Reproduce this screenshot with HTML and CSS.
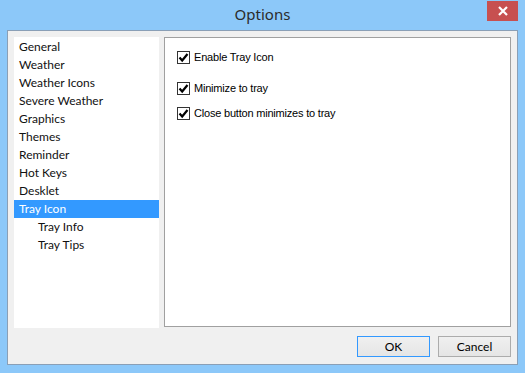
FILE: index.html
```html
<!DOCTYPE html>
<html lang="en">
<head>
<meta charset="UTF-8">
<title>Options</title>
<link rel="stylesheet" href="styles.css">
</head>
<body>
<div class="window">
  <div class="titlebar">
    <span class="title">Options</span>
    <button class="close" type="button">
      <svg width="12" height="10" viewBox="0 0 12 10"><path d="M2 1 L10 9 M10 1 L2 9" stroke="#fff" stroke-width="2.2"/></svg>
    </button>
  </div>

  <div class="client">
    <div class="panes">
      <ul class="tree">
        <li>General</li>
        <li>Weather</li>
        <li>Weather Icons</li>
        <li>Severe Weather</li>
        <li>Graphics</li>
        <li>Themes</li>
        <li>Reminder</li>
        <li>Hot Keys</li>
        <li>Desklet</li>
        <li class="selected">Tray Icon</li>
        <li class="sub">Tray Info</li>
        <li class="sub">Tray Tips</li>
      </ul>

      <div class="page">
        <label class="check first"><span class="box"><svg width="11" height="11" viewBox="0 0 11 11"><path d="M1.5 5.5 L4.2 8.5 L9.5 2" fill="none" stroke="#000" stroke-width="2.2"/></svg></span>Enable Tray Icon</label>
        <label class="check"><span class="box"><svg width="11" height="11" viewBox="0 0 11 11"><path d="M1.5 5.5 L4.2 8.5 L9.5 2" fill="none" stroke="#000" stroke-width="2.2"/></svg></span>Minimize to tray</label>
        <label class="check"><span class="box"><svg width="11" height="11" viewBox="0 0 11 11"><path d="M1.5 5.5 L4.2 8.5 L9.5 2" fill="none" stroke="#000" stroke-width="2.2"/></svg></span>Close button minimizes to tray</label>
      </div>
    </div>

    <div class="buttons">
      <button type="button" class="btn default">OK</button>
      <button type="button" class="btn">Cancel</button>
    </div>
  </div>
</div>
</body>
</html>
```

FILE: styles.css
```css
body {
  margin: 0;
  font-family: 'Lato', 'Liberation Sans', sans-serif;
  font-size: 12px;
  color: #000;
}
.window {
  width: 525px;
  height: 373px;
  box-sizing: border-box;
  background: #8cc8f9;
  display: flex;
  flex-direction: column;
}
.titlebar {
  height: 30px;
  position: relative;
  display: flex;
  align-items: center;
  justify-content: center;
}
.title {
  font-family: 'Noto Sans', sans-serif;
  font-size: 15px;
  color: #2b2b2b;
  margin-top: -2px;
}
.close {
  position: absolute;
  top: 1px;
  right: 7px;
  width: 31px;
  height: 20px;
  border: none;
  background: #c75050;
  display: flex;
  align-items: center;
  justify-content: center;
  padding: 0;
}
.client {
  margin: 0 7px 8px 7px;
  flex: 1;
  background: #f0f0f0;
  border: 1px solid #8a9fb6;
  display: flex;
  flex-direction: column;
  padding: 6px 6px 7px 6px;
}
.panes {
  display: flex;
  align-items: flex-start;
  gap: 5px;
  height: 291px;
}
.tree {
  list-style: none;
  margin: 0;
  padding: 1px 0 0 0;
  width: 145px;
  height: 291px;
  box-sizing: border-box;
  background: #fff;
}
.tree li {
  height: 18px;
  line-height: 18px;
  padding-left: 5px;
  color: #111;
}
.tree li.selected {
  background: #3399ff;
  color: #fff;
}
.tree li.sub {
  padding-left: 24px;
}
.page {
  flex: 1;
  height: 290px;
  box-sizing: border-box;
  background: #fff;
  border: 1px solid #a0a0a0;
  padding: 11px 0 0 12px;
  display: flex;
  flex-direction: column;
  align-items: flex-start;
}
.check {
  display: flex;
  align-items: center;
  gap: 4px;
  height: 16px;
  margin-top: 9px;
  font-family: 'Liberation Sans', sans-serif;
  font-size: 11px;
  letter-spacing: -0.2px;
  color: #000;
}
.check.first {
  margin-top: 0;
  margin-bottom: 6px;
}
.box {
  width: 11px;
  height: 11px;
  border: 1px solid #333;
  background: #fff;
  display: flex;
}
.buttons {
  display: flex;
  justify-content: flex-end;
  gap: 8px;
  margin-top: 8px;
}
.btn {
  width: 73px;
  height: 21px;
  font-family: 'Lato', 'Liberation Sans', sans-serif;
  font-size: 12px;
  color: #000;
  background: linear-gradient(#f0f0f0, #e5e5e5);
  border: 1px solid #acacac;
  padding: 0;
}
.btn.default {
  border-color: #3399ff;
}
```
